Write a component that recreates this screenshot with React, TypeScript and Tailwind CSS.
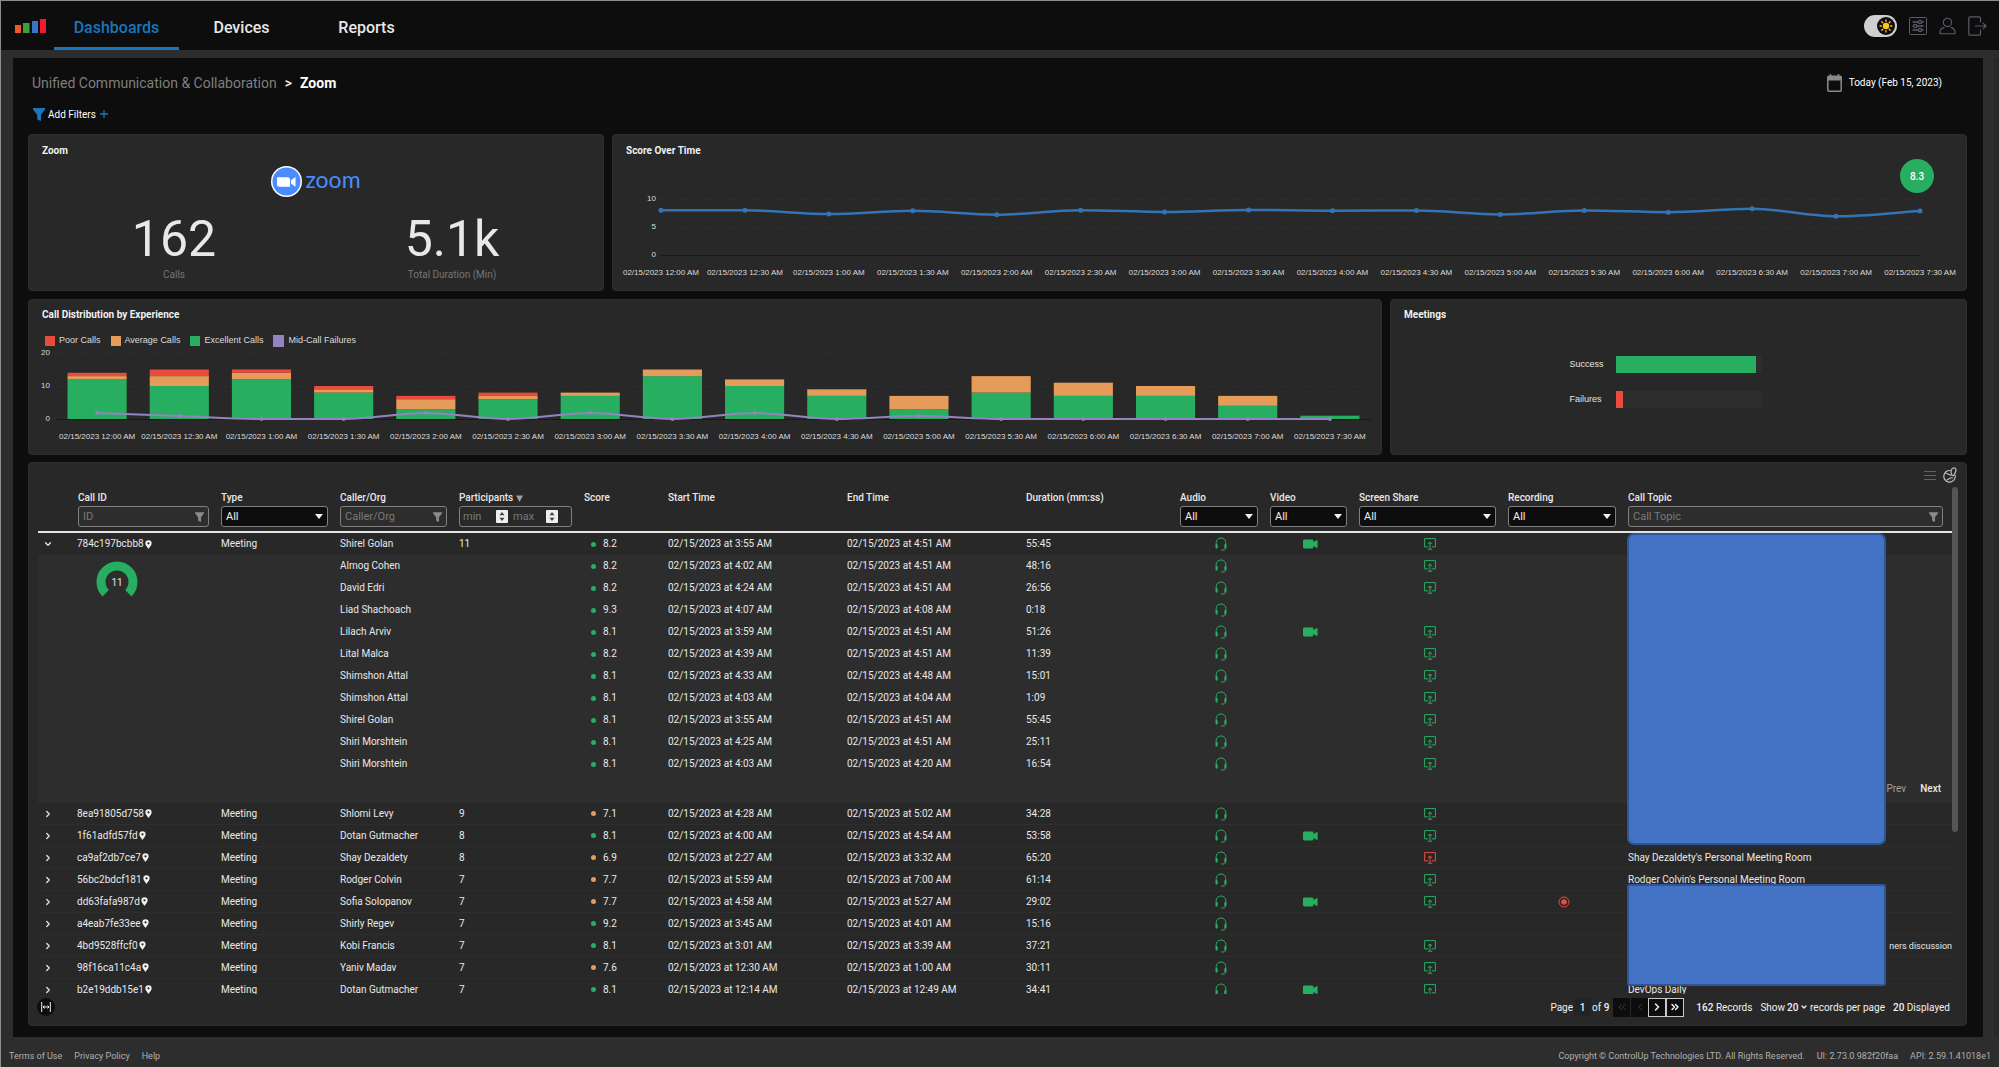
import React from "react";
import { ChevronDown, ChevronLeft, ChevronRight, ChevronsLeft, ChevronsRight } from "lucide-react";

/* ------------------------------------------------------------------ data */

const TIMES = [
  "12:00", "12:30", "1:00", "1:30", "2:00", "2:30", "3:00", "3:30",
  "4:00", "4:30", "5:00", "5:30", "6:00", "6:30", "7:00", "7:30",
];
const LABELS = TIMES.map((t) => `02/15/2023 ${t} AM`);

const SCORES = [8, 8, 7.3, 7.9, 7.2, 8, 7.7, 8.05, 7.9, 7.95, 7.25, 7.95, 7.65, 8.25, 6.9, 7.85];

// excellent, average, poor
const CALLS: [number, number, number][] = [
  [12, 1, 1], [10, 3, 2], [12, 2, 1], [8, 1, 1], [3, 3, 1], [6, 1, 1], [7, 1, 0], [13, 2, 0],
  [10, 2, 0], [7, 2, 0], [3, 4, 0], [8, 5, 0], [7, 4, 0], [7, 3, 0], [4, 3, 0], [1, 0, 0],
];
const FAILURES = [2, 1, 0, 0, 2, 0, 2, 0, 2, 0, 1, 0, 0, 0, 0, 0];

type Share = "ok" | "bad" | "";
type Row = {
  id?: string;
  caller: string;
  people?: string;
  score: string;
  start: string;
  end: string;
  duration: string;
  video?: boolean;
  share: Share;
  recording?: boolean;
  topic?: string;
  topicTail?: string;
};

const FIRST: Row = {
  id: "784c197bcbb8", caller: "Shirel Golan", people: "11", score: "8.2", start: "3:55 AM", end: "4:51 AM",
  duration: "55:45", video: true, share: "ok",
};

const MEMBERS: Row[] = [
  { caller: "Almog Cohen", score: "8.2", start: "4:02 AM", end: "4:51 AM", duration: "48:16", share: "ok" },
  { caller: "David Edri", score: "8.2", start: "4:24 AM", end: "4:51 AM", duration: "26:56", share: "ok" },
  { caller: "Liad Shachoach", score: "9.3", start: "4:07 AM", end: "4:08 AM", duration: "0:18", share: "" },
  { caller: "Lilach Arviv", score: "8.1", start: "3:59 AM", end: "4:51 AM", duration: "51:26", video: true, share: "ok" },
  { caller: "Lital Malca", score: "8.2", start: "4:39 AM", end: "4:51 AM", duration: "11:39", share: "ok" },
  { caller: "Shimshon Attal", score: "8.1", start: "4:33 AM", end: "4:48 AM", duration: "15:01", share: "ok" },
  { caller: "Shimshon Attal", score: "8.1", start: "4:03 AM", end: "4:04 AM", duration: "1:09", share: "ok" },
  { caller: "Shirel Golan", score: "8.1", start: "3:55 AM", end: "4:51 AM", duration: "55:45", share: "ok" },
  { caller: "Shiri Morshtein", score: "8.1", start: "4:25 AM", end: "4:51 AM", duration: "25:11", share: "ok" },
  { caller: "Shiri Morshtein", score: "8.1", start: "4:03 AM", end: "4:20 AM", duration: "16:54", share: "ok" },
];

const REST: Row[] = [
  { id: "8ea91805d758", caller: "Shlomi Levy", people: "9", score: "7.1", start: "4:28 AM", end: "5:02 AM", duration: "34:28", share: "ok" },
  { id: "1f61adfd57fd", caller: "Dotan Gutmacher", people: "8", score: "8.1", start: "4:00 AM", end: "4:54 AM", duration: "53:58", video: true, share: "ok" },
  { id: "ca9af2db7ce7", caller: "Shay Dezaldety", people: "8", score: "6.9", start: "2:27 AM", end: "3:32 AM", duration: "65:20", share: "bad", topic: "Shay Dezaldety's Personal Meeting Room" },
  { id: "56bc2bdcf181", caller: "Rodger Colvin", people: "7", score: "7.7", start: "5:59 AM", end: "7:00 AM", duration: "61:14", share: "ok", topic: "Rodger Colvin's Personal Meeting Room" },
  { id: "dd63fafa987d", caller: "Sofia Solopanov", people: "7", score: "7.7", start: "4:58 AM", end: "5:27 AM", duration: "29:02", video: true, share: "ok", recording: true },
  { id: "a4eab7fe33ee", caller: "Shirly Regev", people: "7", score: "9.2", start: "3:45 AM", end: "4:01 AM", duration: "15:16", share: "" },
  { id: "4bd9528ffcf0", caller: "Kobi Francis", people: "7", score: "8.1", start: "3:01 AM", end: "3:39 AM", duration: "37:21", share: "ok", topicTail: "ners discussion" },
  { id: "98f16ca11c4a", caller: "Yaniv Madav", people: "7", score: "7.6", start: "12:30 AM", end: "1:00 AM", duration: "30:11", share: "ok" },
  { id: "b2e19ddb15e1", caller: "Dotan Gutmacher", people: "7", score: "8.1", start: "12:14 AM", end: "12:49 AM", duration: "34:41", video: true, share: "ok", topic: "DevOps Daily" },
];

/* ----------------------------------------------------------------- icons */

function FunnelIcon({ className }: { className: string }) {
  return (
    <svg viewBox="0 0 12 13" className={className} fill="currentColor" aria-hidden="true">
      <path d="M0 0h12v1.6L8 6.8V13L4.2 11.4V6.8L0 1.6z" />
    </svg>
  );
}

function HeadsetIcon() {
  return (
    <svg viewBox="0 0 12 14" className="h-3.5 w-3" fill="none" stroke="#27ae60" strokeLinecap="round" role="img" aria-label="Audio">
      <path d="M1.2 8V5.6C1.2 2.8 3.3 1 6 1s4.8 1.8 4.8 4.6V8" />
      <path d="M1.6 8v2.6M10.4 8v2.6" strokeWidth="2.2" />
      <path d="M10.6 11c0 1.4-.9 2-2.6 2H6.6" />
    </svg>
  );
}

function CameraIcon() {
  return (
    <svg viewBox="0 0 15 10" className="h-2.5 w-[15px]" fill="#27ae60" role="img" aria-label="Video">
      <rect x="0" y="0.5" width="10.5" height="9" rx="1.4" />
      <path d="M9.5 3.6 13.6 1.2q1-.4 1 .6v6.4q0 1-1 .6L9.5 6.4z" />
    </svg>
  );
}

function ShareIcon({ bad }: { bad: boolean }) {
  return (
    <svg viewBox="0 0 12 12" className={bad ? "size-3 text-[#e74c3c]" : "size-3 text-[#27ae60]"} fill="none" stroke="currentColor" role="img" aria-label="Screen share">
      <path d="M4.2 8.9H.6V.6h10.8v8.3H7.8" />
      <path d="M6 10.8V4.4M4 5.9 6 4l2 1.9M3.8 11.2h4.4" />
    </svg>
  );
}

function RecordIcon() {
  return (
    <svg viewBox="0 0 12 12" className="size-3" role="img" aria-label="Recording">
      <circle cx="6" cy="6" r="5" fill="none" stroke="#e74c3c" />
      <circle cx="6" cy="6" r="2.8" fill="#e74c3c" />
    </svg>
  );
}

function PinIcon() {
  return (
    <svg viewBox="0 0 8 10" className="h-[9px] w-[7px]" fill="#f2f2f2" aria-hidden="true">
      <path fillRule="evenodd" d="M4 0a3.6 3.6 0 0 1 3.6 3.6C7.6 6 4.6 9 4 10 3.4 9 .4 6 .4 3.6A3.6 3.6 0 0 1 4 0zm0 2.3a1.3 1.3 0 1 0 0 2.6 1.3 1.3 0 0 0 0-2.6z" />
    </svg>
  );
}

/* ---------------------------------------------------------------- charts */

// Monotone cubic path through evenly spaced points.
function smoothPath(xs: number[], ys: number[]) {
  const n = xs.length;
  const d = xs.slice(1).map((x, i) => (ys[i + 1] - ys[i]) / (x - xs[i]));
  const m = xs.map((_, i) => {
    if (i === 0) return d[0];
    if (i === n - 1) return d[n - 2];
    return d[i - 1] * d[i] <= 0 ? 0 : (2 * d[i - 1] * d[i]) / (d[i - 1] + d[i]);
  });
  let path = `M${xs[0]} ${ys[0]}`;
  for (let i = 0; i < n - 1; i++) {
    const h = (xs[i + 1] - xs[i]) / 3;
    path += `C${xs[i] + h} ${ys[i] + m[i] * h} ${xs[i + 1] - h} ${ys[i + 1] - m[i + 1] * h} ${xs[i + 1]} ${ys[i + 1]}`;
  }
  return path;
}

function TimeLabels() {
  return (
    <div className="flex font-['Liberation_Sans',sans-serif] text-[8px] leading-3 text-[#dcdcdc]">
      {LABELS.map((l) => (
        <span key={l} className="flex-1 text-center whitespace-nowrap">{l}</span>
      ))}
    </div>
  );
}

function Axis({ ticks, className }: { ticks: string[]; className: string }) {
  return (
    <div className={`-my-[5px] flex flex-col justify-between text-right font-['Liberation_Sans',sans-serif] text-[8px] leading-[10px] text-[#dcdcdc] ${className}`}>
      {ticks.map((t) => <span key={t}>{t}</span>)}
    </div>
  );
}

function ScoreChart() {
  const xs = SCORES.map((_, i) => i * 84);
  const ys = SCORES.map((s) => 56 - s * 5.6);
  return (
    <div className="mt-10">
      <div className="flex h-14">
        <Axis ticks={["10", "5", "0"]} className="w-[43px]" />
        <svg viewBox="0 0 1260 56" preserveAspectRatio="none" className="mr-[46px] ml-[5px] h-14 min-w-0 flex-1 overflow-visible" role="img" aria-label="Score over time">
          <path d="M0 .5H1260M0 28.5H1260" stroke="#2f2f2f" strokeDasharray="3 3" vectorEffect="non-scaling-stroke" />
          <path d="M0 56.5H1260" stroke="#191919" vectorEffect="non-scaling-stroke" />
          <path d={smoothPath(xs, ys)} fill="none" stroke="#3474b5" strokeWidth="2.500" vectorEffect="non-scaling-stroke" />
          {xs.map((x, i) => (
            <path key={x} d={`M${x} ${ys[i]}h.01`} stroke="#3474b5" strokeWidth="5" strokeLinecap="round" vectorEffect="non-scaling-stroke" />
          ))}
        </svg>
      </div>
      <div className="mt-3 mr-1 ml-1.5"><TimeLabels /></div>
    </div>
  );
}

function CallsChart() {
  const step = 82;
  const unit = 3.3;
  const xs = CALLS.map((_, i) => i * step + step / 2);
  const ys = FAILURES.map((f) => 66 - f * unit * 0.9);
  return (
    <div className="mt-1.5">
      <div className="flex h-[66px]">
        <Axis ticks={["20", "10", "0"]} className="w-[21px]" />
        <svg viewBox="0 0 1312 66" preserveAspectRatio="none" className="mr-2.5 ml-1.5 h-[66px] min-w-0 flex-1 overflow-visible" role="img" aria-label="Calls per half hour">
          <path d="M0 .5H1312M0 33.5H1312" stroke="#2f2f2f" strokeDasharray="3 3" vectorEffect="non-scaling-stroke" />
          <path d="M0 66.5H1312" stroke="#191919" vectorEffect="non-scaling-stroke" />
          {CALLS.map(([ex, av, po], i) => {
            const x = i * step + 11.5;
            return (
              <g key={x}>
                <rect x={x} width="59" y={66 - ex * unit} height={ex * unit} fill="#27ae60" />
                <rect x={x} width="59" y={66 - (ex + av) * unit} height={av * unit} fill="#e59b59" />
                <rect x={x} width="59" y={66 - (ex + av + po) * unit} height={po * unit} fill="#e74c3c" />
              </g>
            );
          })}
          <path d={smoothPath(xs, ys)} fill="none" stroke="#9483c1" strokeWidth="2" vectorEffect="non-scaling-stroke" />
          {xs.map((x, i) => (
            <path key={x} d={`M${x} ${ys[i]}h.01`} stroke="#9483c1" strokeWidth="4" strokeLinecap="round" vectorEffect="non-scaling-stroke" />
          ))}
        </svg>
      </div>
      <div className="mt-3 mr-2.5 ml-[27px]"><TimeLabels /></div>
    </div>
  );
}

/* ------------------------------------------------------------------ shell */

function Card({ title, className, children }: { title?: string; className?: string; children: React.ReactNode }) {
  return (
    <section className={`relative min-w-0 rounded-[4px] border border-[#2e2e2e] bg-[#282828] ${className ?? ""}`}>
      {title && <h2 className="mt-[7px] ml-[13px] text-[10px] leading-4 font-bold text-[#f0f0f0]">{title}</h2>}
      {children}
    </section>
  );
}

function Header() {
  return (
    <header className="flex h-[50px] shrink-0 items-center border-t border-[#8c8c8c] bg-[#0d0d0d] pr-3 pl-3.5">
      <svg viewBox="0 0 31 14" className="h-3.5 w-[31px]" role="img" aria-label="Home">
        <rect x="0" y="6" width="6" height="8" fill="#f15a24" />
        <rect x="8" y="4" width="6.500" height="10" fill="#39a33c" />
        <rect x="17" y="2" width="6" height="12" fill="#3a74c9" />
        <rect x="25" y="0" width="6" height="14" fill="#ed1c2e" />
      </svg>
      <nav className="ml-2 flex h-full text-base font-medium">
        <a href="#dashboards" className="flex w-[125px] items-center justify-center border-b-[3px] border-[#1b75bc] pt-2 text-[#1b75bc]">Dashboards</a>
        <a href="#devices" className="flex w-[125px] items-center justify-center pt-[5px] text-[#e8e8e8]">Devices</a>
        <a href="#reports" className="flex w-[125px] items-center justify-center pt-[5px] text-[#e8e8e8]">Reports</a>
      </nav>
      <div className="ml-auto flex items-center gap-3 text-[#5b5c6b]">
        <button type="button" role="switch" aria-checked="true" aria-label="Dark theme" className="flex h-[22px] w-[33px] items-center justify-end rounded-full bg-[#cfcfcf] pr-0.5">
          <svg viewBox="0 0 18 18" className="size-[18px]" aria-hidden="true">
            <circle cx="9" cy="9" r="9" fill="#0d0d0d" />
            <circle cx="9" cy="9" r="3.2" fill="#fbc51b" />
            <path d="M9 3v1.4M9 13.6V15M3 9h1.4M13.6 9H15M4.8 4.8l1 1M12.2 12.2l1 1M13.2 4.8l-1 1M5.8 12.2l-1 1" stroke="#fbc51b" strokeWidth="1.3" strokeLinecap="round" />
          </svg>
        </button>
        <button type="button" aria-label="Preferences">
          <svg viewBox="0 0 18 18" className="size-[18px]" fill="none" stroke="currentColor">
            <rect x=".5" y=".5" width="17" height="17" rx="1" />
            <path d="M3.5 5h5.8M12.7 5h2M3.5 9h1M8 9h6.7M3.5 13h5.8M12.7 13h2" strokeWidth="1.3" />
            <circle cx="11" cy="5" r="1.6" strokeWidth="1.3" />
            <circle cx="6.2" cy="9" r="1.6" strokeWidth="1.3" />
            <circle cx="11" cy="13" r="1.6" strokeWidth="1.3" />
          </svg>
        </button>
        <button type="button" aria-label="Account">
          <svg viewBox="0 0 18 18" className="h-[18px] w-[17px]" fill="none" stroke="currentColor" strokeWidth="1.2">
            <circle cx="9" cy="5.2" r="4.4" />
            <path d="M5.600 10.500C2.800 11.200 1 13.600.9 16.200Q.9 17.200 1.900 17.200H16.100Q17.100 17.200 17.100 16.200C17 13.600 15.200 11.200 12.400 10.500" />
          </svg>
        </button>
        <button type="button" aria-label="Log out">
          <svg viewBox="0 0 19 20" className="h-5 w-[19px]" fill="none" stroke="currentColor" strokeWidth="1.2">
            <path d="M12.500 6.500V2.100Q12.500.8 11.200.8H2.100Q.8.8.8 2.100V17.900Q.8 19.200 2.100 19.200H11.200Q12.500 19.200 12.500 17.900V13.500" />
            <path d="M7 10H18M14.800 6.800 18 10 14.800 13.200" />
          </svg>
        </button>
      </div>
    </header>
  );
}

/* ------------------------------------------------------------------ table */

function TextFilter({ label, placeholder }: { label: string; placeholder: string }) {
  return (
    <div className="flex h-[21px] items-center rounded-[3px] border border-[#808080] bg-[#2d2d2d] pr-1">
      <input aria-label={label} placeholder={placeholder} className="min-w-0 flex-1 bg-transparent px-1 text-[11px] font-normal outline-none placeholder:text-[#7a7a7a]" />
      <FunnelIcon className="h-2.5 w-[9px] text-[#8a8a8a]" />
    </div>
  );
}

function SelectFilter({ label }: { label: string }) {
  return (
    <div className="relative">
      <select aria-label={label} className="block h-[21px] w-full appearance-none rounded-[3px] border border-[#808080] bg-[#0d0d0d] pl-1 text-[11px] font-normal text-[#f0f0f0] outline-none">
        <option>All</option>
      </select>
      <svg viewBox="0 0 8 5" className="pointer-events-none absolute top-2 right-[5px] h-[5px] w-2" fill="#f2f2f2" aria-hidden="true"><path d="M0 0h8L4 5z" /></svg>
    </div>
  );
}

function Stepper({ placeholder }: { placeholder: string }) {
  return (
    <span className="flex w-[50px] items-center">
      <input aria-label={`Participants ${placeholder}`} placeholder={placeholder} className="w-9 bg-transparent pl-[3px] text-[11px] font-normal outline-none placeholder:text-[#7a7a7a]" />
      <svg viewBox="0 0 12 13" className="h-[13px] w-3 shrink-0" aria-hidden="true">
        <rect width="12" height="13" rx="1" fill="#efefef" />
        <path d="M6 2l2.600 3.200H3.400zM6 11 3.400 7.800h5.200z" fill="#444" />
      </svg>
    </span>
  );
}

const TH = "px-1.5 pt-1 pb-1 text-left align-top font-medium border-b-2 border-[#e4e4e4]";

function HeadCell({ label, children }: { label: React.ReactNode; children?: React.ReactNode }) {
  return (
    <th scope="col" className={TH}>
      <div className="mb-px h-3.5 leading-[14px] whitespace-nowrap">{label}</div>
      {children}
    </th>
  );
}

function CallCells({ row, line }: { row: Row; line: string }) {
  const dot = parseFloat(row.score) >= 8 ? "bg-[#27ae60]" : "bg-[#e59b59]";
  return (
    <>
      <td className={`px-1.5 ${line}`}>{row.caller}</td>
      <td className={`px-1.5 ${line}`}>{row.people}</td>
      <td className={`pl-[13px] ${line}`}>
        <span className="flex items-center gap-[7px]"><i className={`size-[5px] rounded-full ${dot}`} />{row.score}</span>
      </td>
      <td className={`px-1.5 ${line}`}>02/15/2023 at {row.start}</td>
      <td className={`px-1.5 ${line}`}>02/15/2023 at {row.end}</td>
      <td className={`px-1.5 ${line}`}>{row.duration}</td>
      <td className={`pl-1 ${line}`}><span className="flex justify-center"><HeadsetIcon /></span></td>
      <td className={`pl-1 ${line}`}>{row.video && <span className="flex justify-center"><CameraIcon /></span>}</td>
      <td className={`pl-1 ${line}`}>{row.share && <span className="flex justify-center"><ShareIcon bad={row.share === "bad"} /></span>}</td>
      <td className={`pl-1 ${line}`}>{row.recording && <span className="flex justify-center"><RecordIcon /></span>}</td>
      <td className={row.topicTail ? `text-right ${line}` : `px-1.5 ${line}`}>
        {row.topicTail ? <span className="text-[9px]">{row.topicTail}</span> : row.topic}
      </td>
    </>
  );
}

function SummaryRow({ row, open }: { row: Row; open?: boolean }) {
  const line = open ? "" : "border-b border-[#2e2e2e]";
  return (
    <tr className="h-[22px]">
      <td className={`pl-[5px] ${line}`}>
        <button type="button" aria-label={open ? "Collapse" : "Expand"} className="block">
          {open ? <ChevronDown className="size-2.5" strokeWidth={3} /> : <ChevronRight className="size-2.5" strokeWidth={3} />}
        </button>
      </td>
      <td className={`pl-[5px] ${line}`}><span className="flex items-center gap-px">{row.id}<PinIcon /></span></td>
      <td className={`px-1.5 ${line}`}>Meeting</td>
      <CallCells row={row} line={line} />
    </tr>
  );
}

function Donut() {
  return (
    <svg viewBox="0 0 42 36" className="h-9 w-[42px]" role="img" aria-label="11 participants">
      <path d="M9.700 32.300A16 16 0 1 1 32.300 32.300" fill="none" stroke="#27ae60" strokeWidth="9" />
      <text x="21" y="24.500" textAnchor="middle" fontSize="10" fill="#e4e4e4">11</text>
    </svg>
  );
}

function CallTable() {
  return (
    <table className="w-full table-fixed border-separate border-spacing-0 text-[10px] leading-3 whitespace-nowrap text-[#e8e8e8]">
      <colgroup>
        <col className="w-[34px]" /><col className="w-[143px]" /><col className="w-[119px]" /><col className="w-[119px]" />
        <col className="w-[125px]" /><col className="w-[84px]" /><col className="w-[179px]" /><col className="w-[179px]" />
        <col className="w-[154px]" /><col className="w-[90px]" /><col className="w-[89px]" /><col className="w-[149px]" />
        <col className="w-[120px]" /><col />
      </colgroup>
      <thead>
        <tr>
          <th className={TH} aria-label="Expand" />
          <HeadCell label="Call ID"><TextFilter label="Call ID" placeholder="ID" /></HeadCell>
          <HeadCell label="Type"><SelectFilter label="Type" /></HeadCell>
          <HeadCell label="Caller/Org"><TextFilter label="Caller/Org" placeholder="Caller/Org" /></HeadCell>
          <HeadCell
            label={
              <span className="flex items-center gap-[3px]">
                Participants
                <svg viewBox="0 0 7 7" className="size-[7px]" fill="#a0a0a0" aria-hidden="true"><path d="M0 .5h7L3.500 7z" /></svg>
              </span>
            }
          >
            <div className="flex h-[21px] items-center rounded-[3px] border border-[#808080]">
              <Stepper placeholder="min" /><Stepper placeholder="max" />
            </div>
          </HeadCell>
          <HeadCell label="Score" />
          <HeadCell label="Start Time" />
          <HeadCell label="End Time" />
          <HeadCell label="Duration (mm:ss)" />
          <HeadCell label="Audio"><SelectFilter label="Audio" /></HeadCell>
          <HeadCell label="Video"><SelectFilter label="Video" /></HeadCell>
          <HeadCell label="Screen Share"><SelectFilter label="Screen Share" /></HeadCell>
          <HeadCell label="Recording"><SelectFilter label="Recording" /></HeadCell>
          <HeadCell label="Call Topic"><div className="mr-[3px]"><TextFilter label="Call Topic" placeholder="Call Topic" /></div></HeadCell>
        </tr>
      </thead>
      <tbody>
        <SummaryRow row={FIRST} open />
      </tbody>
      <tbody className="bg-[#2d2d2d]">
        {MEMBERS.map((m, i) => (
          <tr key={i} className="h-[22px]">
            {i === 0 && (
              <>
                <td rowSpan={10} />
                <td rowSpan={10} className="pt-1.5 pl-6 align-top"><Donut /></td>
                <td rowSpan={10} />
              </>
            )}
            <CallCells row={m} line="" />
          </tr>
        ))}
        <tr className="h-7">
          <td colSpan={14} className="pr-[11px]">
            <span className="flex justify-end gap-3.5">
              <button type="button" className="text-[#a0a0a0]">Prev</button>
              <button type="button" className="font-medium">Next</button>
            </span>
          </td>
        </tr>
      </tbody>
      <tbody>
        {REST.map((r) => <SummaryRow key={r.id} row={r} />)}
      </tbody>
    </table>
  );
}

function Pagination() {
  return (
    <div className="mt-[3px] flex h-5 items-center pr-4 pl-2 text-[10px] text-[#f0f0f0]">
      <button type="button" aria-label="Fit columns" className="grid size-[18px] place-items-center rounded-full bg-[#0d0d0d]">
        <svg viewBox="0 0 10 10" className="size-2.5" fill="none" stroke="#f2f2f2">
          <path d="M.7 0v10M9.300 0v10M2 5h6M3.500 3.500 2 5l1.500 1.500M6.500 3.500 8 5 6.500 6.500" />
        </svg>
      </button>
      <label className="ml-auto flex items-center">
        Page
        <input aria-label="Page" defaultValue="1" className="mx-px h-[18px] w-[17px] bg-[#232323] text-center font-medium outline-none" />
      </label>
      <span className="whitespace-pre">of <b className="font-medium">9</b></span>
      <div className="ml-1 flex">
        <button type="button" aria-label="First page" className="mr-px grid h-[19px] w-[17px] place-items-center bg-[#0d0d0d] text-[#3f3f3f]"><ChevronsLeft className="size-3" /></button>
        <button type="button" aria-label="Previous page" className="grid h-[19px] w-[17px] place-items-center bg-[#0d0d0d] text-[#3f3f3f]"><ChevronLeft className="size-3" /></button>
        <button type="button" aria-label="Next page" className="grid h-[19px] w-[18px] place-items-center border border-[#c8c8c8] bg-[#0d0d0d]"><ChevronRight className="size-3" strokeWidth={3} /></button>
        <button type="button" aria-label="Last page" className="grid h-[19px] w-[18px] place-items-center border border-[#c8c8c8] bg-[#0d0d0d]"><ChevronsRight className="size-3" strokeWidth={3} /></button>
      </div>
      <span className="ml-3"><b className="font-medium">162</b> Records</span>
      <label className="ml-2 flex items-center gap-0.5">
        Show
        <span className="relative flex items-center">
          <select aria-label="Records per page" className="w-[21px] appearance-none bg-transparent font-medium outline-none"><option>20</option></select>
          <ChevronDown className="pointer-events-none absolute right-0 size-2" strokeWidth={4} />
        </span>
        records per page
      </label>
      <span className="ml-2"><b className="font-medium">20</b> Displayed</span>
    </div>
  );
}

/* -------------------------------------------------------------------- app */

export default function App() {
  return (
    <div className="flex h-screen flex-col border-l border-[#8c8c8c] bg-[#2d2d2d] font-[Roboto,sans-serif] text-[#e4e4e4]">
      <Header />
      <div className="flex min-h-0 flex-1 pt-2 pl-3">
        <main className="flex min-w-0 flex-1 flex-col bg-[#0d0d0d] pt-[15px] pr-4 pb-[11px] pl-[15px]">
          <div className="flex h-5 items-center pr-[25px] pl-1 text-sm">
            <p className="text-[#7f7f7f]">
              <a href="#ucc">Unified Communication &amp; Collaboration</a>
              <span className="mx-2 font-medium text-[#f0f0f0]">&gt;</span>
              <span className="font-bold text-white">Zoom</span>
            </p>
            <button type="button" className="ml-auto flex items-center gap-[7px] text-[10px] text-white">
              <svg viewBox="0 0 15 18" className="h-[18px] w-[15px]" fill="none" stroke="#8a8a8a" strokeWidth="1.500" aria-hidden="true">
                <rect x=".8" y="2.300" width="13.400" height="14.900" rx="1" />
                <path d="M.8 4.500h13.400" strokeWidth="4" />
                <path d="M3.500 0v3M11.500 0v3" />
              </svg>
              Today (Feb 15, 2023)
            </button>
          </div>
          <div className="mt-[13px] flex h-4 items-center pl-[5px] text-[10px] text-white">
            <FunnelIcon className="h-[13px] w-3 text-[#1b75bc]" />
            <button type="button" className="ml-[3px] flex items-center gap-1">
              Add Filters
              <svg viewBox="0 0 8 8" className="size-2" stroke="#1b75bc" strokeWidth="1.300" aria-hidden="true"><path d="M4 0v8M0 4h8" /></svg>
            </button>
          </div>

          <div className="mt-3 grid grid-cols-[576fr_1355fr] gap-2">
            <Card title="Zoom" className="min-h-[157px] pt-px">
              <div className="mt-[7px] flex h-[31px] items-center justify-center gap-[3px]">
                <svg viewBox="0 0 31 31" className="size-[31px]" aria-hidden="true">
                  <circle cx="15.500" cy="15.500" r="15.500" fill="#fff" />
                  <circle cx="15.500" cy="15.500" r="14" fill="#4a8cff" />
                  <path d="M6 11.200h10.500q2.500 0 2.500 2.500v7H8.500Q6 20.700 6 18.200zM20 14.200l4.500-3.300v9.800L20 17.500z" fill="#fff" />
                </svg>
                <span className="pb-1 font-[Lato,sans-serif] text-[23px] leading-none text-[#4a8cff]">zoom</span>
              </div>
              <dl className="mt-4 grid grid-cols-2 pr-3 pl-1.5 text-center">
                <div className="flex flex-col-reverse">
                  <dt className="mt-1 text-[10px] leading-3 text-[#757575]">Calls</dt>
                  <dd className="text-[50px] leading-[52px] text-[#e8e8e8]">162</dd>
                </div>
                <div className="flex flex-col-reverse">
                  <dt className="mt-1 text-[10px] leading-3 text-[#757575]">Total Duration (Min)</dt>
                  <dd className="text-[50px] leading-[52px] text-[#e8e8e8]">5.1k</dd>
                </div>
              </dl>
            </Card>
            <Card title="Score Over Time" className="pt-px">
              <span className="absolute top-6 right-8 grid size-[34px] place-items-center rounded-full bg-[#27ae60] text-[10px] font-medium text-white">8.3</span>
              <ScoreChart />
            </Card>
          </div>

          <div className="mt-2 grid grid-cols-[1354fr_577fr] gap-2">
            <Card title="Call Distribution by Experience" className="min-h-[156px]">
              <ul className="mt-3 ml-4 flex h-3 items-center gap-2.5 font-['Liberation_Sans',sans-serif] text-[9px] text-[#dcdcdc]">
                <li className="flex items-center gap-1"><i className="size-2.5 bg-[#e74c3c]" />Poor Calls</li>
                <li className="flex items-center gap-1"><i className="size-2.5 bg-[#e59b59]" />Average Calls</li>
                <li className="flex items-center gap-1"><i className="size-2.5 bg-[#27ae60]" />Excellent Calls</li>
                <li className="flex items-center gap-1"><i className="h-3 w-[11px] bg-[#9483c1]" />Mid-Call Failures</li>
              </ul>
              <CallsChart />
            </Card>
            <Card title="Meetings">
              <div className="flex justify-center pt-[33px] pr-[26px]">
                <dl className="grid w-[192px] grid-cols-[46px_1fr] items-center gap-y-[18px] font-['Liberation_Sans',sans-serif] text-[9px]">
                  <dt>Success</dt>
                  <dd className="h-[17px] bg-[#2d2d2d]"><div className="h-full w-[96%] bg-[#27ae60]" /></dd>
                  <dt>Failures</dt>
                  <dd className="h-[17px] bg-[#2d2d2d]"><div className="h-full w-[5%] bg-[#e74c3c]" /></dd>
                </dl>
              </div>
            </Card>
          </div>

          <Card className="mt-[7px] flex min-h-0 flex-1 flex-col pb-2">
            <div className="flex h-6 shrink-0 items-center justify-end gap-[7px] pr-[9px]">
              <button type="button" aria-label="Row density">
                <svg viewBox="0 0 12 9" className="h-[9px] w-3" stroke="#1b75bc" aria-hidden="true"><path d="M0 .5h12M0 4.500h12M0 8.500h12" /></svg>
              </button>
              <button type="button" aria-label="Clear filters">
                <svg viewBox="0 0 14 16" className="h-4 w-3.5" fill="none" stroke="#bdbdbd" strokeWidth="1.200" aria-hidden="true">
                  <path d="M7.500 3.600A5.800 5.800 0 1 0 12.200 8" />
                  <path d="M8.200 6.200C7.600 3 9 .8 11 .8c2.200 0 2.400 2.600 1.400 4.600L10.600 8.600C9.500 9 8.500 7.600 8.200 6.200zM2.500 6.200C5 6.500 6 8.200 8.300 8.400M3.600 12.800C6.200 12.600 6.500 10.400 9.800 10.800" />
                </svg>
              </button>
            </div>
            <div className="flex min-h-0 flex-1 pr-2 pl-[9px]">
              <div className="relative min-w-0 flex-1 overflow-hidden">
                <CallTable />
                <div className="absolute top-[46px] right-[66px] h-[312px] w-[259px] rounded-[7px] border-2 border-[#2f5597] bg-[#4472c4]" />
                <div className="absolute top-[397px] right-[66px] h-[102px] w-[259px] rounded-[3px] border-2 border-[#2f5597] bg-[#4472c4]" />
              </div>
              <div className="w-1.5"><div className="h-[68%] w-full rounded-full bg-[#555]" /></div>
            </div>
            <Pagination />
          </Card>
        </main>
        <div className="ml-[11px] w-[5px] bg-[#282828]" />
      </div>
      <footer className="flex h-[30px] shrink-0 items-center gap-3 pt-[9px] pr-2 pl-2 text-[9px] text-[#b0b0b0]">
        <a href="#terms">Terms of Use</a>
        <a href="#privacy">Privacy Policy</a>
        <a href="#help">Help</a>
        <span className="ml-auto">Copyright © ControlUp Technologies LTD. All Rights Reserved.</span>
        <span>UI: 2.73.0.982f20faa</span>
        <span>API: 2.59.1.41018e1</span>
      </footer>
    </div>
  );
}
